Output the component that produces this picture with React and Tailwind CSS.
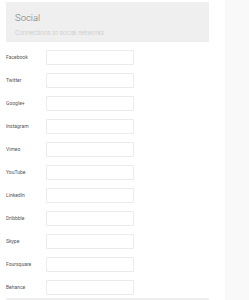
import React from 'react';

const networks = [
    'Facebook', 'Twitter', 'Google+', 'Instagram', 'Vimeo', 'YouTube',
    'LinkedIn', 'Dribbble', 'Skype', 'Foursquare', 'Behance'
];

const App = () => {
    return (
        <div className="flex w-[249px] h-[300px] overflow-hidden bg-white" style={{ fontFamily: 'Roboto, "Liberation Sans", sans-serif' }}>
            <div className="w-[225px] pl-[6px] pr-[16px] pt-[2px]">
                <div className="bg-[#efefef] h-[40px] pl-[9px] pt-[10px]">
                    <h2 className="text-[9.5px] leading-[12px] font-light text-[#777]">Social</h2>
                    <p className="text-[6.5px] leading-[8px] mt-[5px] font-light text-[#c4c4c4]">Connections to social networks.</p>
                </div>
                <div className="flex flex-col gap-[8px] mt-[8px]">
                    {networks.map((name) => (
                        <div key={name} className="flex items-center h-[15px]">
                            <label className="w-[40px] text-[5px] text-[#555]">{name}</label>
                            <input className="w-[88px] h-[15px] border border-[#ebebeb] rounded-[1px] bg-white" />
                        </div>
                    ))}
                </div>
                <div className="h-[2px] bg-[#eeeeee] mt-[3px]"></div>
            </div>
            <div className="flex-1 bg-[#f9f9f9]"></div>
        </div>
    );
};

export default App;
